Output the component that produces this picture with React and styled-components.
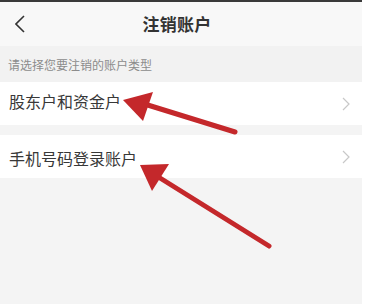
import React from "react";
import styled, { createGlobalStyle } from "styled-components";

const GlobalStyle = createGlobalStyle`
  html, body {
    margin: 0;
    padding: 0;
    background: #ffffff;
  }
  body {
    font-family: "Noto Sans CJK SC", "Noto Sans", sans-serif;
  }
`;

const Screen = styled.div`
  position: relative;
  width: 365px;
  height: 304px;
  overflow: hidden;
  display: flex;
`;

const Page = styled.div`
  width: 362px;
  display: flex;
  flex-direction: column;
  background: #f4f4f4;
`;

const EdgeStrip = styled.div`
  flex: 1;
  background: #ffffff;
`;

const StatusLine = styled.div`
  height: 2px;
  background: #3a3a3a;
`;

const Header = styled.div`
  height: 44px;
  display: flex;
  align-items: center;
  justify-content: center;
  position: relative;
  background: #f8f8f8;
`;

const BackButton = styled.div`
  position: absolute;
  left: 13px;
  top: 12px;
  width: 14px;
  height: 20px;
  display: flex;
  align-items: center;
  justify-content: center;
`;

const Title = styled.h1`
  margin: 0;
  font-size: 17px;
  font-weight: 700;
  color: #333333;
  letter-spacing: 0.2px;
  transform: translate(-4px, -1px);
`;

const Hint = styled.div`
  height: 36px;
  padding-left: 8px;
  display: flex;
  align-items: center;
  font-size: 12px;
  color: #8c8c8c;
  background: #f2f2f2;
`;

const List = styled.div`
  display: flex;
  flex-direction: column;
  gap: 10px;
`;

const Row = styled.div`
  height: 43px;
  padding: 0 12px 0 9px;
  display: flex;
  align-items: center;
  justify-content: space-between;
  background: #ffffff;
`;

const RowLabel = styled.span`
  font-size: 16px;
  color: #383838;
  transform: translateY(${(p) => p.$shift}px);
`;

const Overlay = styled.svg`
  position: absolute;
  left: 0;
  top: 0;
  pointer-events: none;
`;

const Chevron = ({ color = "#c8c8c8", w = 8, h = 14, stroke = 1.2, dir = "right" }) => (
  <svg width={w} height={h} viewBox={`0 0 ${w} ${h}`}>
    {dir === "right" ? (
      <polyline points={`1,1 ${w - 1},${h / 2} 1,${h - 1}`} fill="none" stroke={color} strokeWidth={stroke} />
    ) : (
      <polyline points={`${w - 1},1 1,${h / 2} ${w - 1},${h - 1}`} fill="none" stroke={color} strokeWidth={stroke} />
    )}
  </svg>
);

const accounts = [
  { label: "股东户和资金户", shift: -3 },
  { label: "手机号码登录账户", shift: 1 },
];

const ARROW_RED = "#c4282b";

export default function App() {
  return (
    <Screen>
      <GlobalStyle />
      <Page>
        <StatusLine />
        <Header>
          <BackButton>
            <Chevron dir="left" color="#333333" w={10} h={18} stroke={1.6} />
          </BackButton>
          <Title>注销账户</Title>
        </Header>
        <Hint>请选择您要注销的账户类型</Hint>
        <List>
          {accounts.map((a) => (
            <Row key={a.label}>
              <RowLabel $shift={a.shift}>{a.label}</RowLabel>
              <Chevron />
            </Row>
          ))}
        </List>
      </Page>
      <EdgeStrip />
      <Overlay width="365" height="304" viewBox="0 0 365 304">
        <line x1="235" y1="132" x2="138" y2="102" stroke={ARROW_RED} strokeWidth="5" strokeLinecap="round" />
        <polygon points="123,100 153,92 143,121" fill={ARROW_RED} />
        <line x1="269" y1="246" x2="152" y2="173" stroke={ARROW_RED} strokeWidth="5" strokeLinecap="round" />
        <polygon points="140,165 169,164 152,191" fill={ARROW_RED} />
      </Overlay>
    </Screen>
  );
}
